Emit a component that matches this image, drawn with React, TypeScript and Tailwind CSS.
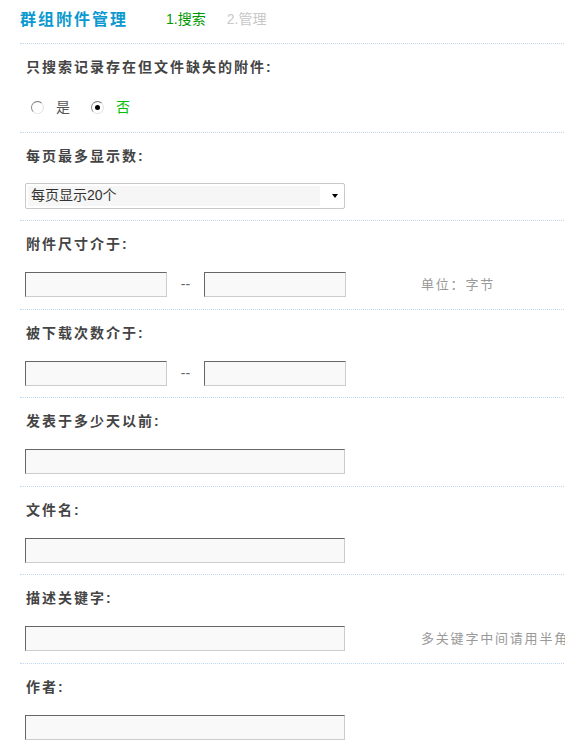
const font = "font-['Liberation_Sans','Noto_Sans_CJK_SC',sans-serif]";

function TextBox({ width }: { width: string }) {
  return (
    <input
      type="text"
      className={`${width} h-[25px] border border-t-[#666] border-l-[#666] border-r-[#ccc] border-b-[#ccc] bg-[#f9f9f9] px-1 text-[13px] outline-none`}
    />
  );
}

function Radio({ checked, label }: { checked?: boolean; label: string }) {
  return (
    <label className="flex items-center">
      <span className="flex h-[13px] w-[13px] items-center justify-center rounded-full border border-t-[#777] border-l-[#888] border-r-[#e2e2e2] border-b-[#e2e2e2] bg-white">
        {checked && <span className="h-[5px] w-[5px] rounded-full bg-black" />}
      </span>
      <span
        className={`ml-[12px] text-[14px] ${checked ? "text-[#00c000]" : "text-[#555]"}`}
      >
        {label}
      </span>
    </label>
  );
}

function Section({ label, children }: { label: string; children: React.ReactNode }) {
  return (
    <div className="h-[88.5px] border-t border-dotted border-[#bcd9f3] pl-[6px] pt-[13px]">
      <div className="h-[20px] text-[14px] font-bold leading-[20px] tracking-[2px] text-[#444]">
        {label}:
      </div>
      <div className="mt-[18px] flex h-[25px] items-center whitespace-nowrap">
        {children}
      </div>
    </div>
  );
}

export default function App() {
  return (
    <div className={`w-full overflow-hidden bg-white ${font}`}>
      <div className="w-[700px] pl-[20px]">
        <div className="flex h-[43px] items-center pb-[4px]">
          <span className="text-[16px] font-bold tracking-[2px] text-[#0b99cf]">
            群组附件管理
          </span>
          <span className="ml-[38px] text-[14px] text-[#009a00]">1.搜索</span>
          <span className="ml-[21px] text-[14px] text-[#c8c8c8]">2.管理</span>
        </div>

        <Section label="只搜索记录存在但文件缺失的附件">
          <div className="ml-[5px] flex items-center gap-[21px]">
            <Radio label="是" />
            <Radio checked label="否" />
          </div>
        </Section>

        <div className="h-[88.5px] border-t border-dotted border-[#bcd9f3] pl-[6px] pt-[13px]">
          <div className="h-[20px] text-[14px] font-bold leading-[20px] tracking-[2px] text-[#444]">
            每页最多显示数:
          </div>
          <div className="-ml-[1px] mt-[17px] flex h-[26px] w-[320px] items-center rounded-[2px] border border-[#c9c9c9] bg-white pl-[2px] pr-[6px]">
            <div className="flex h-[20px] w-[292px] items-center bg-[#f6f6f6] pl-[3px] text-[14px] text-[#333]">
              每页显示20个
            </div>
            <span className="ml-auto h-0 w-0 border-x-[3.5px] border-t-[4px] border-x-transparent border-t-black" />
          </div>
        </div>

        <Section label="附件尺寸介于">
          <div className="-ml-[1px] flex items-center">
            <TextBox width="w-[142px]" />
            <span className="mx-[12px] w-[13px] text-center text-[14px] text-[#666]">--</span>
            <TextBox width="w-[142px]" />
            <span className="ml-[75px] text-[13px] tracking-[1.8px] text-[#999]">单位：字节</span>
          </div>
        </Section>

        <Section label="被下载次数介于">
          <div className="-ml-[1px] flex items-center">
            <TextBox width="w-[142px]" />
            <span className="mx-[12px] w-[13px] text-center text-[14px] text-[#666]">--</span>
            <TextBox width="w-[142px]" />
          </div>
        </Section>

        <Section label="发表于多少天以前">
          <div className="-ml-[1px]">
            <TextBox width="w-[320px]" />
          </div>
        </Section>

        <Section label="文件名">
          <div className="-ml-[1px]">
            <TextBox width="w-[320px]" />
          </div>
        </Section>

        <Section label="描述关键字">
          <div className="-ml-[1px] flex items-center">
            <TextBox width="w-[320px]" />
            <span className="ml-[76px] text-[13px] tracking-[1.8px] text-[#999]">
              多关键字中间请用半角逗号 "," 隔开
            </span>
          </div>
        </Section>

        <Section label="作者">
          <div className="-ml-[1px]">
            <TextBox width="w-[320px]" />
          </div>
        </Section>
      </div>
    </div>
  );
}
